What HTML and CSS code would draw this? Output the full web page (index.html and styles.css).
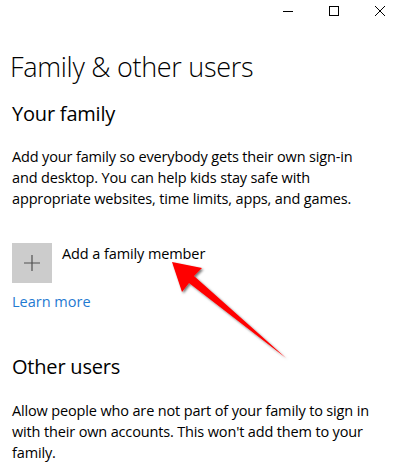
FILE: index.html
```html
<!DOCTYPE html>
<html lang="en">
<head>
  <meta charset="UTF-8">
  <title>Family &amp; other users</title>
  <link rel="stylesheet" href="styles.css">
</head>
<body>
  <div class="window">
    <div class="titlebar">
      <span class="ctl" title="Minimize">
        <svg width="10" height="10" viewBox="0 0 10 10"><path d="M0 5.5H10" stroke="#000" stroke-width="1"/></svg>
      </span>
      <span class="ctl" title="Maximize">
        <svg width="10" height="10" viewBox="0 0 10 10"><rect x="0.5" y="0.5" width="9" height="9" fill="none" stroke="#000" stroke-width="1"/></svg>
      </span>
      <span class="ctl" title="Close">
        <svg width="10" height="10" viewBox="0 0 10 10"><path d="M0 0L10 10M10 0L0 10" stroke="#000" stroke-width="1"/></svg>
      </span>
    </div>

    <main class="page">
      <h1 class="page-title">Family &amp; other users</h1>

      <section class="group">
        <h2 class="group-title">Your family</h2>
        <p class="desc">Add your family so everybody gets their own sign-in and desktop. You can help kids stay safe with appropriate websites, time limits, apps, and games.</p>
        <div class="add-row">
          <span class="add-tile">
            <svg width="16" height="16" viewBox="0 0 16 16"><path d="M8 0V16M0 8H16" stroke="#505050" stroke-width="1.2"/></svg>
          </span>
          <span class="add-label">Add a family member</span>
        </div>
        <a class="link" href="#">Learn more</a>
      </section>

      <section class="group">
        <h2 class="group-title">Other users</h2>
        <p class="desc">Allow people who are not part of your family to sign in with their own accounts. This won't add them to your family.</p>
      </section>
    </main>

    <!-- annotation arrow laid over the screenshot -->
    <svg class="arrow" width="394" height="463" viewBox="0 0 394 463">
      <defs>
        <filter id="shade" x="-20%" y="-20%" width="140%" height="140%">
          <feDropShadow dx="1.5" dy="1.5" stdDeviation="1.2" flood-color="#000" flood-opacity="0.55"/>
        </filter>
      </defs>
      <polygon points="172,262 202,268 194,276 286,358 189,283 182,292" fill="#ff0000" filter="url(#shade)"/>
    </svg>
  </div>
</body>
</html>
```

FILE: styles.css
```css
* { box-sizing: border-box; }
html, body { margin: 0; padding: 0; }

body {
  background: #FFF;
  color: #000;
  font-family: "Open Sans", "Noto Sans", sans-serif;
  overflow: hidden;
}

.window { position: relative; width: 394px; height: 463px; }

/* Title bar */
.titlebar {
  display: flex;
  justify-content: flex-end;
  align-items: center;
  gap: 36px;
  height: 22px;
  padding-right: 9px;
}
.ctl { display: flex; }

/* Content */
.page { padding: 0 12px; }

.page-title {
  margin: 27px 0 0 -2px;
  font-size: 27px;
  font-weight: 300;
  line-height: 36px;
  letter-spacing: -0.3px;
}

.group-title {
  margin: 0;
  font-size: 20px;
  font-weight: 400;
  line-height: 28px;
  letter-spacing: -0.2px;
}

.page-title + .group .group-title { margin-top: 15px; }

.desc {
  max-width: 364px;
  margin: 18px 0 0;
  font-size: 14.5px;
  line-height: 21px;
  letter-spacing: -0.15px;
}
.group + .group .desc { margin-top: 19px; }

.add-row {
  display: flex;
  align-items: flex-start;
  gap: 10px;
  margin-top: 34px;
}
.add-tile {
  width: 40px;
  height: 40px;
  background: #CCCCCC;
  display: flex;
  align-items: center;
  justify-content: center;
}
.add-label { font-size: 14.5px; line-height: 22px; letter-spacing: -0.1px; }

.link {
  display: inline-block;
  margin-top: 8px;
  color: #1F7AD1;
  font-size: 14.5px;
  line-height: 22px;
  text-decoration: none;
}

.group + .group .group-title { margin-top: 40px; }

.arrow { position: absolute; top: 0; left: 0; pointer-events: none; }
```
